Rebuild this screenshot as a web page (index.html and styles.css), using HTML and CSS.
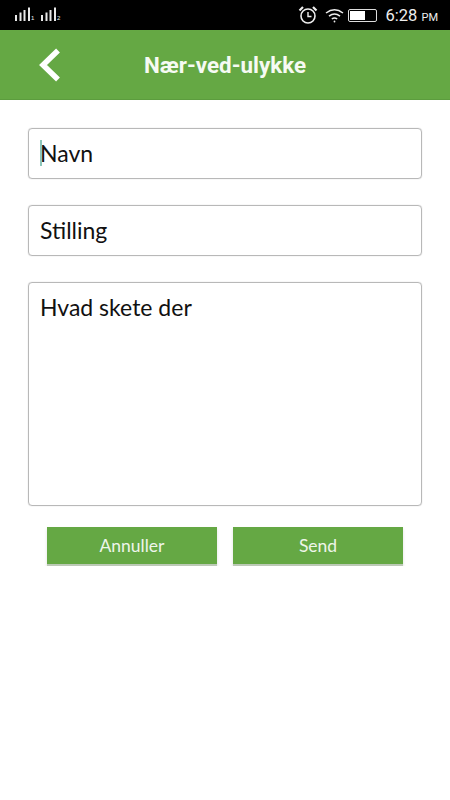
FILE: index.html
```html
<!DOCTYPE html>
<html lang="da">
<head>
    <meta charset="UTF-8">
    <meta name="viewport" content="width=device-width, initial-scale=1.0">
    <title>Nær-ved-ulykke</title>
    <link rel="stylesheet" href="styles.css">
</head>
<body>
    <div class="status-bar">
        <div class="signals">
            <svg width="16" height="15" viewBox="0 0 16 15">
                <path d="M1 9v6M5.500 6.500V15M9.500 4V15M14 1.500V15" stroke="#e8e8e8" stroke-width="2" fill="none"/>
            </svg>
            <span class="sim">1</span>
            <svg width="16" height="15" viewBox="0 0 16 15">
                <path d="M1 9v6M5.500 6.500V15M9.500 4V15M14 1.500V15" stroke="#e8e8e8" stroke-width="2" fill="none"/>
            </svg>
            <span class="sim">2</span>
        </div>
        <div class="status-right">
            <svg class="alarm" width="20" height="20" viewBox="0 0 20 20" fill="none" stroke="#eee">
                <circle cx="10" cy="11" r="7" stroke-width="1.600"/>
                <path d="M10 7v4.500h3.500" stroke-width="1.400"/>
                <path d="M1.500 5.500 5 2M18.500 5.500 15 2" stroke-width="2.200"/>
            </svg>
            <svg class="wifi" width="19" height="15" viewBox="0 0 19 15" fill="none" stroke="#eee" stroke-width="1.500">
                <path d="M1 5Q9.500 -1.500 18 5"/>
                <path d="M4 8.200Q9.500 3.800 15 8.200"/>
                <path d="M6.800 11Q9.500 9 12.200 11"/>
                <circle cx="9.500" cy="13.500" r="0.900" fill="#eee" stroke="none"/>
            </svg>
            <div class="battery"><div class="battery-fill"></div></div>
            <span class="clock">6:28 <small>PM</small></span>
        </div>
    </div>

    <div class="header">
        <svg class="back" width="24" height="36" viewBox="0 0 24 36" fill="none">
            <path d="M20 3.500 5 18l15 14.500" stroke="#fff" stroke-width="5.500"/>
        </svg>
        <div class="title">Nær-ved-ulykke</div>
    </div>

    <div class="form">
        <div class="field"><span class="cursor"></span>Navn</div>
        <div class="field">Stilling</div>
        <div class="field field-big">Hvad skete der</div>
        <div class="buttons">
            <div class="button">Annuller</div>
            <div class="button">Send</div>
        </div>
    </div>
</body>
</html>
```

FILE: styles.css
```css
body {
    margin: 0;
    font-family: Lato, "Noto Sans", sans-serif;
    background-color: white;
    color: #111;
}
.status-bar {
    height: 30px;
    background-color: black;
    display: flex;
    justify-content: space-between;
    align-items: center;
    padding: 0 12px 0 15px;
}
.signals {
    display: flex;
    align-items: flex-end;
    height: 15px;
    margin-top: -3px;
}
.sim {
    font-family: "Liberation Sans", sans-serif;
    font-size: 6px;
    line-height: 6px;
    color: #eee;
    width: 10px;
}
.status-right {
    display: flex;
    align-items: center;
}
.alarm {
    margin-right: 7px;
    margin-top: -1px;
}
.wifi {
    margin-right: 4px;
}
.battery {
    width: 27px;
    height: 11px;
    border: 1px solid #ddd;
    border-radius: 2px;
    margin-right: 9px;
}
.battery-fill {
    width: 15px;
    height: 9px;
    margin: 1px;
    background-color: white;
}
.clock {
    font-family: Roboto, sans-serif;
    font-size: 16.500px;
    color: #eee;
    white-space: nowrap;
}
.clock small {
    font-size: 11px;
}
.header {
    height: 70px;
    box-sizing: border-box;
    background-color: #65a844;
    border-bottom: 1px solid #5c9c3e;
    display: flex;
    align-items: center;
    position: relative;
}
.back {
    position: absolute;
    left: 38px;
    top: 17px;
}
.title {
    width: 100%;
    text-align: center;
    font-family: Roboto, sans-serif;
    font-weight: bold;
    font-size: 22.400px;
    color: #f6faf3;
}
.form {
    padding: 28px 28px 0;
}
.field {
    height: 51px;
    box-sizing: border-box;
    border: 1px solid #b8b8b8;
    border-radius: 4px;
    box-shadow: 0 0 1px rgba(0, 0, 0, 0.3);
    margin-bottom: 26px;
    padding-left: 11px;
    font-size: 23px;
    line-height: 49px;
    position: relative;
}
.field-big {
    height: 224px;
    margin-bottom: 21px;
}
.cursor {
    position: absolute;
    left: 11px;
    top: 11px;
    width: 2px;
    height: 26px;
    background-color: #8cc6bb;
}
.buttons {
    display: flex;
    gap: 16px;
    padding-left: 19px;
}
.button {
    width: 170px;
    height: 37px;
    background-color: #65a844;
    border-bottom: 2px solid #bcc9b6;
    box-shadow: 0 2px 3px rgba(0, 0, 0, 0.12);
    color: #eef5ea;
    text-align: center;
    font-size: 17.500px;
    line-height: 37px;
}
```
